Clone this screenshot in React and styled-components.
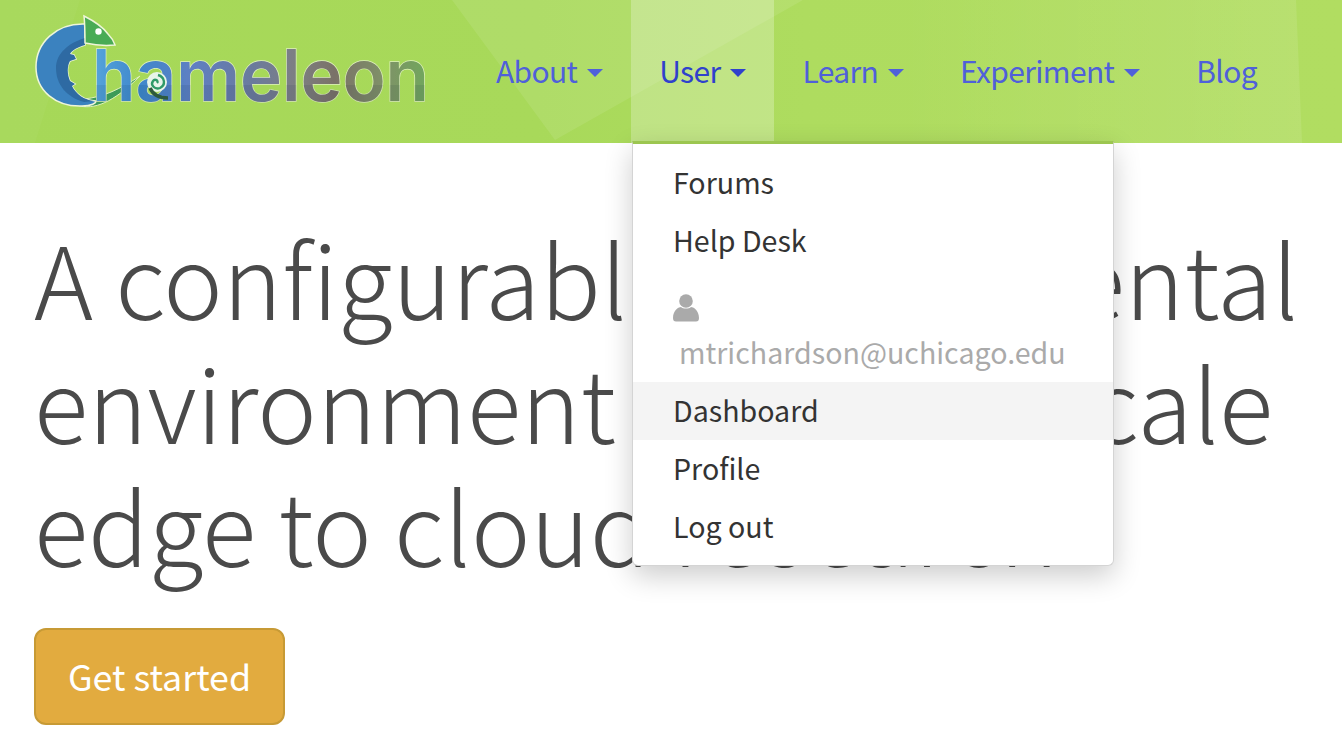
import React from 'react';
import styled, { createGlobalStyle } from 'styled-components';

const FONT = `"Noto Sans CJK SC", "Noto Sans", sans-serif`;

const Global = createGlobalStyle`
  html, body { margin: 0; padding: 0; background: #fff; overflow: hidden; }
  body { font-family: ${FONT}; }
`;
const Page = styled.div`
  width: 1342px; height: 752px; overflow: hidden; display: flex; flex-direction: column;
`;
const Header = styled.header`
  position: relative; height: 143px; flex: none; display: flex; align-items: stretch; justify-content: space-between;
  padding: 0 57px 0 34px; box-sizing: border-box;
  background: linear-gradient(90deg, #a6d858 0%, #a8d95a 40%, #aedc5f 60%, #b1dd61 100%);
`;
const Decor = styled.svg`
  position: absolute; inset: 0; width: 100%; height: 100%;
`;
const LogoLink = styled.a`
  position: relative; display: flex; align-items: flex-start; padding-top: 12px;
`;
const Nav = styled.nav`
  position: relative; display: flex; align-items: stretch;
`;
const NavItem = styled.a`
  display: flex; align-items: center; gap: 10px; height: 143px; box-sizing: border-box; padding: 0 28px 4px 28px;
  font-size: 30px; line-height: 1; letter-spacing: -0.65px; color: ${p => (p.$active ? '#2f41cc' : '#4f60da')};
  background: ${p => (p.$active ? 'rgba(255,255,255,.25)' : 'transparent')};
`;
const Caret = styled.span`
  width: 0; height: 0; border-left: 8px solid transparent; border-right: 8px solid transparent; border-top: 8px solid currentColor; margin-top: 6px;
`;
const Main = styled.main`
  position: relative; flex: 1; padding: 72px 34px 0 34px;
`;
const Heading = styled.h1`
  margin: 0; font-size: 100.4px; line-height: 123.5px; font-weight: 300; color: #4a4a4a; width: 1300px;
`;
const CTA = styled.a`
  display: inline-flex; align-items: center; justify-content: center; box-sizing: border-box; width: 251px; height: 97px; margin-top: 42px; padding-bottom: 2px;
  background: #e2ab3f; border: 2px solid #c79a35; border-radius: 12px; color: #fff; font-size: 35.8px;
`;
const Menu = styled.div`
  position: absolute; left: 632px; top: 141px; width: 482px; height: 425px; box-sizing: border-box; padding: 10px 0 10px;
  background: #fff; border: 1px solid #d4d4d4; border-top: 3px solid #9cc650; border-radius: 0 0 6px 6px;
  box-shadow: 0 10px 28px rgba(0,0,0,.2);
`;
const MenuItem = styled.a`
  display: flex; align-items: center; height: 58px; box-sizing: border-box; padding: 0 0 4px 40px; font-size: 28.6px; color: #333;
  background: ${p => (p.$hover ? '#f4f4f4' : 'transparent')};
`;
const UserBlock = styled.div`
  height: 112px; padding: 24px 0 0 40px; box-sizing: border-box; color: #aaa;
`;
const Email = styled.div`
  font-size: 28.6px; line-height: 36px; margin: 12px 0 0 6px; white-space: nowrap;
`;

const UserIcon = () => (
  <svg width="26" height="28" viewBox="0 0 26 28" style={{ display: 'block' }}>
    <circle cx="13" cy="7" r="6.8" fill="#aaa" />
    <path d="M0 24 C0 16 6 13 8 13 C10 15 16 15 18 13 C20 13 26 16 26 24 C26 26.5 25 27.5 23 27.5 H3 C1 27.5 0 26.5 0 24 Z" fill="#aaa" />
  </svg>
);

const Logo = () => (
  <svg width="395" height="100" viewBox="34 12 395 100" overflow="visible">
    <defs>
      <linearGradient id="lt" x1="0" x2="1" y1="0" y2="0">
        <stop offset="0" stopColor="#56a5dc" />
        <stop offset=".14" stopColor="#3f88cc" />
        <stop offset=".3" stopColor="#5f7fc2" />
        <stop offset=".48" stopColor="#6b7a9c" />
        <stop offset=".6" stopColor="#7d7f84" />
        <stop offset=".72" stopColor="#7a7268" />
        <stop offset=".86" stopColor="#7f9068" />
        <stop offset="1" stopColor="#70a85c" />
      </linearGradient>
      <filter id="b" x="-5%" y="-5%" width="110%" height="110%"><feGaussianBlur stdDeviation=".6" /></filter>
      <filter id="tb" filterUnits="userSpaceOnUse" x="90" y="40" width="345" height="70">
        <feFlood floodColor="#1b2a50" floodOpacity=".16" x="90" y="85" width="345" height="25" result="f" />
        <feComposite in="f" in2="SourceAlpha" operator="in" result="band" />
        <feMerge result="m"><feMergeNode in="SourceGraphic" /><feMergeNode in="band" /></feMerge>
        <feGaussianBlur in="m" stdDeviation=".6" />
      </filter>
    </defs>
    <g filter="url(#b)">
      <path d="M80 106 C98 110 118 98 140 76 C120 89 104 97 84 99 C76 100 72 102 80 106 Z" fill="#3c9a58" stroke="#dff0bd" strokeWidth="1" />
      <path d="M85 24 C56 23 36 43 36 67 C36 91 56 107 82 106 C92 106 96 103 96 101 C84 100 76 94 72 86 L75 84 L70 81 C67 74 67 66 70 61 L76 59 L74 55 L70 54 C72 50 78 47 85 45 Z" fill="#3a82bf" stroke="#eef5d8" strokeWidth="1.5" />
      <path d="M85 38 C68 43 56 54 56 68 C56 84 66 97 84 102 L94 101 C84 100 76 94 72 86 L75 84 L70 81 C67 74 67 66 70 61 L76 59 L74 55 L70 54 C72 50 78 47 85 45 Z" fill="#2d6ba3" />
      <path d="M84 16 C94 21 103 27 108 34 C112 38 114 42 115 45 C106 46 94 45 85 43 C85 34 85 25 84 16 Z" fill="#49ab55" stroke="#eef5d8" strokeWidth="1.5" />
      <circle cx="98.5" cy="31.5" r="3.2" fill="#fff" />
    </g>
    <text x="92" y="100.5" fontFamily='"Inter", sans-serif' fontWeight="600" fontSize="72" textLength="337" lengthAdjust="spacingAndGlyphs" fill="url(#lt)" stroke="#dff0bd" strokeWidth="1.4" paintOrder="stroke" filter="url(#tb)">hameleon</text>
    <g filter="url(#b)">
      <circle cx="157" cy="82" r="10" fill="#e8f5ea" />
      <path d="M157 83 C159 81 155 78 153 81 C150 85 155 90 160 88 C166 85 165 77 158 75" fill="none" stroke="#2f9a68" strokeWidth="2.4" />
      <path d="M150 88 C153 95 160 98 168 98" fill="none" stroke="#2d5a3c" strokeWidth="3.4" />
    </g>
  </svg>
);

const Items = [['About', true], ['User', true], ['Learn', true], ['Experiment', true], ['Blog', false]];

export default function App() {
  return (
    <Page>
      <Global />
      <Header>
        <Decor viewBox="0 0 1342 143" preserveAspectRatio="none">
          <defs>
            <linearGradient id="rightGlow" x1="0" x2="1" y1="0" y2="0">
              <stop offset="0" stopColor="#fff" stopOpacity="0" />
              <stop offset="1" stopColor="#fff" stopOpacity=".1" />
            </linearGradient>
          </defs>
          <polygon points="0,0 80,0 35,143 0,143" fill="#fff" opacity=".03" />
          <polygon points="452,0 803,0 555,140" fill="#fff" opacity=".09" />
          <polygon points="900,0 1296,0 1302,143 900,143" fill="url(#rightGlow)" />
        </Decor>
        <LogoLink><Logo /></LogoLink>
        <Nav>
          {Items.map(([t, c]) => (
            <NavItem key={t} $active={t === 'User'}>{t}{c && <Caret />}</NavItem>
          ))}
        </Nav>
      </Header>
      <Main>
        <Heading>A configurable experimental environment for large-scale edge to cloud research</Heading>
        <CTA>Get started</CTA>
      </Main>
      <Menu>
        <MenuItem>Forums</MenuItem>
        <MenuItem>Help Desk</MenuItem>
        <UserBlock>
          <UserIcon />
          <Email>mtrichardson@uchicago.edu</Email>
        </UserBlock>
        <MenuItem $hover>Dashboard</MenuItem>
        <MenuItem>Profile</MenuItem>
        <MenuItem>Log out</MenuItem>
      </Menu>
    </Page>
  );
}
